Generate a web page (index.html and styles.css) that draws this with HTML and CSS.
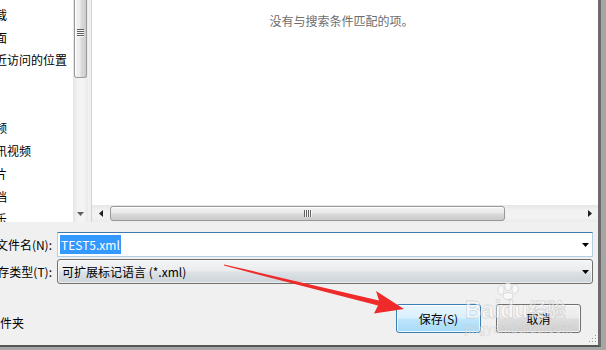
FILE: index.html
```html
<!DOCTYPE html>
<html lang="zh-CN">
<head>
<meta charset="utf-8">
<title>另存为</title>
<link rel="stylesheet" href="styles.css">
</head>
<body>
<div class="screen">
  <div class="dialog">
    <div class="panes">
      <ul class="nav">
        <li>下载</li>
        <li>桌面</li>
        <li>最近访问的位置</li>
        <li class="blank"></li>
        <li class="blank"></li>
        <li>视频</li>
        <li>腾讯视频</li>
        <li>图片</li>
        <li>文档</li>
        <li>音乐</li>
      </ul>
      <div class="vscroll">
        <div class="vthumb"><span class="vgrip"></span></div>
        <div class="vtrack"></div>
        <div class="varrow"><svg width="7" height="4" viewBox="0 0 7 4"><path d="M0 0H7L3.5 4Z" fill="#606060"/></svg></div>
      </div>
      <div class="split"></div>
      <div class="content">
        <div class="results"><p class="empty">没有与搜索条件匹配的项。</p></div>
        <div class="hscroll">
          <div class="harrow"><svg width="4" height="7" viewBox="0 0 4 7"><path d="M4 0V7L0 3.5Z" fill="#202020"/></svg></div>
          <div class="hthumb"><span class="hgrip"></span></div>
          <div class="htrack"></div>
          <div class="harrow"><svg width="4" height="7" viewBox="0 0 4 7"><path d="M0 0V7L4 3.5Z" fill="#202020"/></svg></div>
        </div>
      </div>
    </div>
    <div class="form">
      <div class="field">
        <label class="lbl"><span>文件名(N):</span></label>
        <div class="input">
          <span class="sel">TEST5.xml</span>
          <svg class="drop" width="7" height="4" viewBox="0 0 7 4"><path d="M0 0H7L3.5 4Z" fill="#000"/></svg>
        </div>
      </div>
      <div class="field">
        <label class="lbl"><span>保存类型(T):</span></label>
        <div class="combo">
          <span>可扩展标记语言 (*.xml)</span>
          <svg class="drop" width="7" height="4" viewBox="0 0 7 4"><path d="M0 0H7L3.5 4Z" fill="#000"/></svg>
        </div>
      </div>
      <div class="actions">
        <span class="hide">隐藏文件夹</span>
        <div class="buttons">
          <button class="btn primary">保存(S)</button>
          <button class="btn">取消</button>
        </div>
      </div>
    </div>
    <svg class="grip" width="8" height="8" viewBox="0 0 8 8">
      <g fill="#fff"><rect x="7" y="1" width="1" height="1"/><rect x="7" y="4" width="1" height="1"/><rect x="4" y="4" width="1" height="1"/><rect x="7" y="7" width="1" height="1"/><rect x="4" y="7" width="1" height="1"/><rect x="1" y="7" width="1" height="1"/></g>
      <g fill="#9a9a9a"><rect x="6" y="0" width="1" height="1"/><rect x="6" y="3" width="1" height="1"/><rect x="3" y="3" width="1" height="1"/><rect x="6" y="6" width="1" height="1"/><rect x="3" y="6" width="1" height="1"/><rect x="0" y="6" width="1" height="1"/></g>
    </svg>
  </div>
  <svg class="overlay" width="606" height="350" viewBox="0 0 606 350">
    <polygon points="224,264.4 379,300.6 376,291 404,309 374,313.5 378,305.6 224,265.6" fill="#ee2a2a"/>
    <g class="wm">
      <ellipse cx="501" cy="290" rx="3" ry="4.5"/>
      <ellipse cx="508" cy="286" rx="3" ry="4.5"/>
      <ellipse cx="515" cy="289" rx="3" ry="4.5"/>
      <ellipse cx="508" cy="296" rx="5" ry="3.5"/>
      <text x="465" y="318" class="wm-big">Bai</text>
      <text x="500" y="318" class="wm-big">du</text>
      <text x="528" y="317" class="wm-cn">经验</text>
      <text x="465" y="333" class="wm-url" textLength="107">jingyan.baidu.com</text>
    </g>
  </svg>
</div>
</body>
</html>
```
FILE: styles.css
```css
html, body {
  margin: 0;
  padding: 0;
}
body {
  background: #bdbdbd;
}
.screen {
  position: relative;
  width: 606px;
  height: 350px;
  overflow: hidden;
  background: #a6a6a6;
}
.dialog {
  position: relative;
  width: 598px;
  height: 345px;
  background: #f0f0f0;
  border-right: 3px solid #6b6b6b;
  border-bottom: 2px solid #555;
  display: flex;
  flex-direction: column;
  font-family: "Noto Sans CJK SC", "Noto Sans", sans-serif;
  font-size: 12px;
  color: #000;
}
.panes {
  height: 222px;
  display: flex;
  flex-shrink: 0;
}
.nav {
  width: 73px;
  margin: 0;
  padding: 4px 0 0;
  list-style: none;
  background: #fff;
  overflow: hidden;
  flex-shrink: 0;
}
.nav li {
  height: 22.7px;
  line-height: 22.7px;
  white-space: nowrap;
  margin-left: -17px;
}
.vscroll {
  width: 15px;
  flex-shrink: 0;
  display: flex;
  flex-direction: column;
  background: linear-gradient(to right, #e4e4e4, #f2f2f2 30%, #f4f4f4 70%, #e9e9e9);
}
.vthumb {
  height: 78px;
  box-sizing: border-box;
  margin: 0 1px;
  border: 1px solid #9a9a9a;
  border-top: none;
  border-radius: 0 0 3px 3px;
  background: linear-gradient(to right, #f4f4f4, #ececec 45%, #dcdcdc 55%, #cdcdcd);
  box-shadow: inset 1px 0 0 #fff;
  display: flex;
  justify-content: center;
  padding-top: 29px;
}
.vgrip {
  width: 7px;
  height: 8px;
  background: repeating-linear-gradient(to bottom, #5e5e5e 0 1px, #f8f8f8 1px 2px);
}
.vtrack {
  flex: 1;
}
.varrow {
  height: 17px;
  display: flex;
  align-items: center;
  justify-content: center;
}
.split {
  width: 3px;
  flex-shrink: 0;
  background: #f0f0f0;
  border-right: 1px solid #c6d6e8;
}
.content {
  flex: 1;
  min-width: 0;
  display: flex;
  flex-direction: column;
  background: #fff;
}
.results {
  flex: 1;
  text-align: center;
}
.empty {
  margin: 0;
  padding: 12px 7px 0 0;
  line-height: 18px;
  color: #6d6d6d;
}
.hscroll {
  height: 17px;
  display: flex;
  background: linear-gradient(#e6e6e6, #f1f1f1 30%, #f3f3f3 70%, #ebebeb);
}
.harrow {
  width: 17px;
  flex-shrink: 0;
  display: flex;
  align-items: center;
  justify-content: center;
}
.hthumb {
  width: 395px;
  flex-shrink: 0;
  box-sizing: border-box;
  margin: 1px 0 1px 1px;
  border: 1px solid #989898;
  border-radius: 3px;
  background: linear-gradient(#f4f4f4, #e9e9e9 45%, #d9d9d9 55%, #cbcbcb);
  box-shadow: inset 0 1px 0 #fff;
  display: flex;
  align-items: center;
  justify-content: center;
}
.hgrip {
  width: 8px;
  height: 7px;
  background: repeating-linear-gradient(to right, #5e5e5e 0 1px, #f8f8f8 1px 2px);
}
.htrack {
  flex: 1;
}
.form {
  padding: 10px 5px 0 0;
  display: flex;
  flex-direction: column;
  gap: 2px;
}
.field {
  display: flex;
  height: 25px;
}
.lbl {
  width: 52px;
  flex-shrink: 0;
  margin-right: 5px;
  display: flex;
  justify-content: flex-end;
  align-items: center;
  overflow: hidden;
  white-space: nowrap;
}
.lbl span {
  flex-shrink: 0;
}
.input {
  flex: 1;
  box-sizing: border-box;
  border: 1px solid #b2cfe7;
  border-top-color: #3d7bad;
  background: #fff;
  display: flex;
  align-items: center;
  padding: 0 3px 0 2px;
}
.sel {
  background: #3399ff;
  color: #fff;
  line-height: 19px;
  padding: 0 1px;
}
.drop {
  margin-left: auto;
}
.combo {
  flex: 1;
  box-sizing: border-box;
  border: 1px solid #707070;
  border-radius: 3px;
  background: linear-gradient(#f3f4f5, #eaedef 45%, #dbe1e5 55%, #cdd4da);
  box-shadow: inset 0 0 0 1px rgba(255, 255, 255, 0.6);
  display: flex;
  align-items: center;
  padding: 0 3px 0 4px;
}
.actions {
  display: flex;
  align-items: flex-start;
  margin-top: 18px;
}
.hide {
  margin-left: -36px;
  margin-top: 11px;
  line-height: 16px;
  white-space: nowrap;
}
.buttons {
  margin-left: auto;
  margin-right: 12px;
  display: flex;
  gap: 15px;
}
.btn {
  width: 85px;
  height: 29px;
  padding: 0;
  font: inherit;
  color: #000;
  border: 1px solid #707070;
  border-radius: 3px;
  background: linear-gradient(#f2f2f2, #ebebeb 48%, #dddddd 52%, #cfcfcf);
  box-shadow: inset 0 0 0 1px rgba(255, 255, 255, 0.75);
}
.btn.primary {
  border-color: #3c7fb1;
  background: linear-gradient(#eaf6fd, #d9f0fc 48%, #bee6fd 52%, #a7d9f5);
}
.grip {
  position: absolute;
  right: 1px;
  bottom: 2px;
}
.overlay {
  position: absolute;
  left: 0;
  top: 0;
  pointer-events: none;
}
.wm {
  fill: rgba(255, 255, 255, 0.55);
  stroke: rgba(140, 140, 140, 0.3);
  stroke-width: 0.8;
}
.wm-big {
  font-family: "Liberation Sans", sans-serif;
  font-weight: bold;
  font-size: 23px;
}
.wm-cn {
  font-family: "Noto Sans CJK SC", sans-serif;
  font-weight: bold;
  font-size: 19px;
}
.wm-url {
  font-family: "Liberation Sans", sans-serif;
  font-size: 12px;
  stroke-width: 0.5;
}
```
